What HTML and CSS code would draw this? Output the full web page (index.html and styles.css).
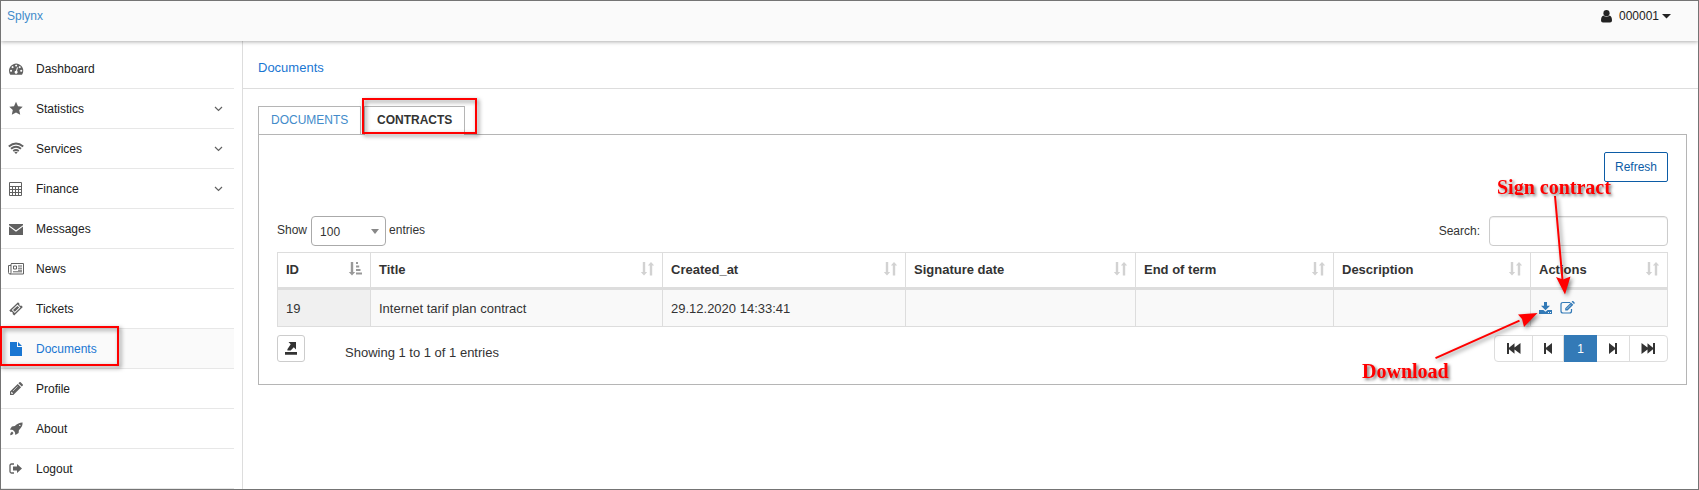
FILE: index.html
```html
<!DOCTYPE html>
<html lang="en">
<head>
<meta charset="utf-8">
<title>Splynx</title>
<link rel="stylesheet" href="styles.css">
</head>
<body>
<svg width="0" height="0" class="defs">
  <symbol id="sort" viewBox="0 0 13 14"><path d="M1.800 0h2.400v10h2L3 13.500-.2 10h2zM8.800 13.500h2.400v-10h2L10 0 6.800 3.500h2z"/></symbol>
</svg>
<div class="app">
  <header class="topbar">
    <a class="brand">Splynx</a>
    <div class="user">
      <svg width="12" height="13" viewBox="0 0 12 13"><circle cx="5.500" cy="3.200" r="3.100"/><path d="M2.300 5.500Q5.500 8 8.700 5.500 11 6.500 11 10.500 11 12.500 9 12.500H2Q0 12.500 0 10.500 0 6.500 2.300 5.500z"/></svg>
      <span>000001</span>
      <svg class="caret" width="9" height="5" viewBox="0 0 9 5"><path d="M0 0h9L4.500 4.600z"/></svg>
    </div>
  </header>
  <div class="main">
    <nav class="sidebar">
      <a class="item"><svg class="ico" viewBox="0 0 1792 1792"><path transform="translate(115 60) scale(.89)" d="M384 1152q0-53-37.500-90.500t-90.500-37.500-90.500 37.500-37.500 90.500 37.500 90.500 90.500 37.500 90.500-37.500 37.500-90.500zm192-448q0-53-37.500-90.500t-90.500-37.500-90.500 37.500-37.500 90.500 37.500 90.500 90.500 37.500 90.500-37.500 37.500-90.500zm428 481l101-382q6-26-7.500-48.500t-38.500-29.500-48 6.500-30 39.500l-101 382q-60 5-107 43.500t-63 98.500q-20 77 20 146t117 89 146-20 89-117q16-60-6-117t-72-91zm660-33q0-53-37.500-90.500t-90.500-37.500-90.500 37.500-37.500 90.500 37.500 90.500 90.500 37.500 90.500-37.500 37.500-90.500zm-640-640q0-53-37.500-90.500t-90.500-37.500-90.500 37.500-37.500 90.500 37.500 90.500 90.500 37.500 90.500-37.500 37.500-90.500zm448 192q0-53-37.500-90.500t-90.500-37.500-90.500 37.500-37.500 90.500 37.500 90.500 90.500 37.500 90.500-37.500 37.500-90.500zm320 448q0 261-141 483-19 29-54 29h-1402q-35 0-54-29-141-221-141-483 0-182 71-348t191-286 286-191 348-71 348 71 286 191 191 286 71 348z"/></svg><span>Dashboard</span></a>
      <a class="item"><svg class="ico" viewBox="0 0 16 16"><path d="M8 .8l2 4.400 4.700.5-3.500 3.200 1 4.900L8 11.400l-4.200 2.400 1-4.900L1.300 5.700 6 5.200z"/></svg><span>Statistics</span><svg class="chev" viewBox="0 0 9 6"><path d="M1 1l3.500 3.400L8 1"/></svg></a>
      <a class="item"><svg class="ico line" viewBox="0 0 16 16"><path d="M.8 5.500Q8 -.7 15.200 5.500M3 7.800Q8 3.600 13 7.800M5.200 10Q8 8 10.800 10" stroke-width="1.900"/><path class="solid" d="M6.300 11.200Q8 10.200 9.700 11.200L8 13z"/></svg><span>Services</span><svg class="chev" viewBox="0 0 9 6"><path d="M1 1l3.500 3.400L8 1"/></svg></a>
      <a class="item"><svg class="ico line" viewBox="0 0 16 16"><path d="M1.500 1.500h12v13h-12zM1.500 5.500h12M1.500 8.500h12M1.500 11.500h12M4.500 5.500v9M7.500 5.500v9M10.500 5.500v9"/></svg><span>Finance</span><svg class="chev" viewBox="0 0 9 6"><path d="M1 1l3.500 3.400L8 1"/></svg></a>
      <a class="item"><svg class="ico" viewBox="0 0 16 16"><path d="M1 3h14v1.200L8 9.200 1 4.200zM1 5.600l7 5.100 7-5.100V14H1z"/></svg><span>Messages</span></a>
      <a class="item"><svg class="ico line" viewBox="0 0 16 16"><path d="M3 2.500h12.500v10.500H2Q.5 13 .5 11.500V4.500H3M3 3v8.500Q3 13 2 13M5.500 5h3v3h-3zM10 5h4M10 7.200h4M10 9.200h4M5 10.800h9"/></svg><span>News</span></a>
      <a class="item"><svg class="ico" viewBox="0 0 16 16"><path fill-rule="evenodd" d="M10 1.300l1.500 1.500q-.5 1 .2 1.700.7.500 1.600.1l1.500 1.500-8.600 8.300-1.600-1.500q.5-1-.2-1.700-.7-.6-1.700-.2L1.300 9.600zM9.500 3.600L3.800 9.100l3 2.900 5.700-5.500zM9.400 4.900l1.800 1.700-4.400 4.200L5 9.100z"/></svg><span>Tickets</span></a>
      <a class="item active"><svg class="ico" viewBox="0 0 16 16"><path d="M2 1h7v5h5v9H2zM10 1l4 4h-4z"/></svg><span>Documents</span></a>
      <a class="item"><svg class="ico" viewBox="0 0 16 16"><path fill-rule="evenodd" d="M2 10.600L9.700 3l3.400 3.300L5.300 14H2zm1.200.6v1.500h1.600l.3-.4-1.600-1.500zM10.400 2.300l1-1q.6-.6 1.300 0l2.100 2.100q.5.500 0 1.200l-1 1z"/><path d="M5 10l4.600-4.600" stroke="#fff" stroke-width=".6"/></svg><span>Profile</span></a>
      <a class="item"><svg class="ico" viewBox="0 0 16 16"><path fill-rule="evenodd" d="M14.600 1.600Q14.800 5.700 10.900 9.200L10.600 12l-3.200 2-.6-3-1.900-1.900-3-.6 2-3.100 2.900-.3Q10.300 1.500 14.600 1.600zM11.800 3.700a.7.700 0 100 1.400.7.700 0 000-1.400zM4 10.500l1.500 1.500-1.300 1.700-2 .5.300-2.200z"/></svg><span>About</span></a>
      <a class="item"><svg class="ico" viewBox="0 0 16 16"><path class="outline" d="M6 3H3.500Q2 3 2 4.500v6Q2 12 3.500 12H6"/><path d="M5 5.500h4V3l5 4.500L9 12V9.500H5z"/></svg><span>Logout</span></a>
    </nav>
    <main class="content">
      <div class="crumb">Documents</div>
      <div class="tabs"><a class="tab">DOCUMENTS</a><a class="tab current">CONTRACTS</a></div>
      <section class="panel">
        <div class="actions"><button class="refresh">Refresh</button></div>
        <div class="tools">
          <div class="length">Show<div class="select"><span>100</span><svg width="8" height="5" viewBox="0 0 8 5"><path d="M0 0h8L4 5z"/></svg></div>entries</div>
          <label class="search">Search:<input type="text"></label>
        </div>
        <table class="grid">
          <colgroup><col class="c1"><col class="c2"><col class="c3"><col class="c4"><col class="c5"><col class="c6"><col class="c7"></colgroup>
          <thead><tr>
            <th><div>ID<svg class="sort on" viewBox="0 0 13 14"><path d="M1.800 0h2.400v10h2L3 13.500-.2 10h2zM7 0h2v2H7zM7 3.500h3.200v2H7zM7 7h4.500v2H7zM7 10.500h6v2H7z"/></svg></div></th>
            <th><div>Title<svg class="sort"><use href="#sort"/></svg></div></th>
            <th><div>Created_at<svg class="sort"><use href="#sort"/></svg></div></th>
            <th><div>Signature date<svg class="sort"><use href="#sort"/></svg></div></th>
            <th><div>End of term<svg class="sort"><use href="#sort"/></svg></div></th>
            <th><div>Description<svg class="sort"><use href="#sort"/></svg></div></th>
            <th><div>Actions<svg class="sort"><use href="#sort"/></svg></div></th>
          </tr></thead>
          <tbody><tr>
            <td class="sorted">19</td><td>Internet tarif plan contract</td><td>29.12.2020 14:33:41</td><td></td><td></td><td></td>
            <td><div class="rowicons">
              <svg width="13" height="12" viewBox="0 0 13 12"><path fill-rule="evenodd" d="M5 0h3v3.800h3L6.500 8.300 2 3.800h3zM0 8h4.400l2.100 1.700L8.600 8H13v4H0zM9 10v1h1v-1zM11 10v1h1v-1z"/></svg>
              <svg width="15" height="13" viewBox="0 0 15 13"><path d="M10.300 1.500H3Q1 1.500 1 3.500v6.500q0 2 2 2h6.500q2 0 2-2V8" fill="none" stroke="#337ab7" stroke-width="1.200"/><path d="M5.200 9.600V7.200L11 1.400l2.300 2.300-5.800 5.900zM11.700.7l.6-.6q.4-.3.800 0l1.500 1.500q.3.400 0 .8l-.6.600z"/><path d="M6.500 8l4.400-4.400" stroke="#f9f9f9" stroke-width=".6"/></svg>
            </div></td>
          </tr></tbody>
        </table>
        <div class="foot">
          <button class="export"><svg width="12" height="13" viewBox="0 0 12 13"><path d="M0 10h12v2.800H0zM3.500 0H11v7.500L8.800 5.300 5.700 8.400H2.400V7.200L5.700 2.200z"/></svg></button>
          <span class="info">Showing 1 to 1 of 1 entries</span>
          <div class="pager">
            <a class="p1"><svg width="14" height="11" viewBox="0 0 14 11"><path d="M0 0h2v4.800L7.500.3v4.300L13.500 0v11L7.500 6.400v4.300L2 6.200V11H0z"/></svg></a>
            <a class="p2"><svg width="8" height="11" viewBox="0 0 8 11"><path d="M0 0h2v4.800L8 0v11L2 6.200V11H0z"/></svg></a>
            <a class="p3">1</a>
            <a class="p4"><svg width="8" height="11" viewBox="0 0 8 11"><path d="M8 0H6v4.800L0 0v11l6-4.800V11h2z"/></svg></a>
            <a class="p5"><svg width="14" height="11" viewBox="0 0 14 11"><path d="M14 0h-2v4.800L6.500.3v4.300L.5 0v11l6-4.600v4.300L12 6.200V11h2z"/></svg></a>
          </div>
        </div>
      </section>
    </main>
  </div>
</div>
<div class="mark mark-menu"></div>
<div class="mark mark-tab"></div>
<svg class="arrows" viewBox="0 0 1699 490">
  <path class="shaft" d="M1555 196l7.500 84M1435.500 358.200l84-37.500"/>
  <path class="head" d="M1565 294.500l-9-17.500 7 2.500 7.500-3zM1537.500 313l-19.500 1.500 4 4.500 2 8z"/>
</svg>
<div class="note note-sign"><span>Sign contract</span></div>
<div class="note note-download"><span>Download</span></div>
</body>
</html>
```

FILE: styles.css
```css
* { box-sizing: border-box; }
body { margin: 0; font-family: "Liberation Sans", Arial, sans-serif; font-size: 12px; color: #333; background: #fff; position: relative; height: 490px; overflow: hidden; }
.defs { position: absolute; }
svg { display: block; flex: none; }
.app { height: 490px; border: 1px solid #747474; display: flex; flex-direction: column; overflow: hidden; }
.topbar { height: 40px; flex: none; background: #fafafa; box-shadow: 0 1px 4px rgba(0,0,0,.32); display: flex; justify-content: space-between; padding: 8px 27px 0 6px; line-height: 14px; position: relative; z-index: 1; }
.brand { color: #428bca; }
.user { display: flex; height: 14px; align-items: center; color: #222; fill: #222; }
.user span { margin: 0 3px 0 6px; }
.main { display: flex; flex: 1; min-height: 0; }
.sidebar { width: 242px; flex: none; border-right: 1px solid #ddd; padding: 8px 8px 0 0; }
.item { display: flex; align-items: center; height: 40px; border-bottom: 1px solid #e7e7e7; padding: 0 11px 0 7px; color: #212121; }
.item span { margin-left: 12px; flex: 1; }
.ico { width: 16px; height: 16px; fill: #616161; }
.line { fill: none; stroke: #616161; stroke-width: 1; }
.solid { fill: #616161; stroke: none; }
.outline { fill: none; stroke: #616161; stroke-width: 1.300; }
.active { background: #fafafa; color: #1976d2; }
.active .ico { fill: #1976d2; }
.chev { width: 9px; height: 6px; fill: none; stroke: #616161; stroke-width: 1.200; }
.content { flex: 1; min-width: 0; }
.crumb { height: 48px; border-bottom: 1px solid #ddd; padding: 19px 15px 0; font-size: 13px; line-height: 15px; color: #1976d2; }
.tabs { display: flex; gap: 3px; padding: 17px 0 0 15px; }
.tab { height: 28px; border: 1px solid #b5b5b5; border-bottom: 0; padding: 0 12px; line-height: 27px; color: #428bca; width: 103px; }
.current { color: #333; font-weight: bold; width: 101px; position: relative; height: 29px; margin-bottom: -1px; background: #fff; }
.panel { margin: 0 11px 0 15px; border: 1px solid #b5b5b5; height: 251px; padding: 17px 18px 0; }
.actions { display: flex; justify-content: flex-end; height: 64px; }
.refresh { width: 64px; height: 30px; border: 1px solid #0c5ca6; border-radius: 2px; background: #fff; color: #0c5ca6; font: 12px "Liberation Sans", sans-serif; padding: 0; }
.tools { display: flex; justify-content: space-between; height: 36px; }
.length { display: flex; line-height: 28px; }
.select { width: 75px; height: 30px; border: 1px solid #aaa; border-radius: 4px; margin: 0 3px 0 4px; display: flex; align-items: center; justify-content: space-between; padding: 2px 6px 0 8px; fill: #888; }
.select svg { margin-bottom: 1px; }
.search { display: flex; line-height: 30px; }
.search input { width: 179px; height: 30px; border: 1px solid #ccc; border-radius: 4px; margin-left: 9px; box-shadow: inset 0 1px 1px rgba(0,0,0,.075); }
.grid { width: 1391px; table-layout: fixed; border-collapse: separate; border-spacing: 0; border-left: 1px solid #ddd; border-top: 1px solid #ddd; font-size: 13px; }
.c1 { width: 93px; }
.c2 { width: 292px; }
.c3 { width: 243px; }
.c4 { width: 230px; }
.c5 { width: 198px; }
.c6 { width: 197px; }
.c7 { width: 137px; }
.grid th, .grid td { padding: 0 8px; border-right: 1px solid #ddd; text-align: left; }
.grid th { height: 37px; border-bottom: 3px solid #ddd; padding-bottom: 2px; }
.grid th div { display: flex; justify-content: space-between; align-items: center; }
.grid td { height: 37px; border-bottom: 1px solid #ddd; background: #f9f9f9; }
.grid .sorted { background: #f0f0f0; }
.sort { width: 13px; height: 14px; fill: #d2d2d2; overflow: visible; }
.on { fill: #999; }
.rowicons { display: flex; gap: 8px; align-items: center; fill: #337ab7; padding-bottom: 1px; }
.foot { display: flex; padding-top: 8px; font-size: 13px; }
.export { width: 28px; height: 27px; border: 1px solid #ccc; border-radius: 3px; background: #fff; display: flex; align-items: center; justify-content: center; padding: 0; fill: #333; }
.info { margin-left: 40px; padding-top: 10px; line-height: 15px; flex: 1; }
.pager { display: flex; width: 174px; height: 27px; border: 1px solid #ddd; border-radius: 4px; fill: #333; }
.pager a { display: flex; align-items: center; justify-content: center; border-right: 1px solid #ddd; }
.p1 { width: 38px; }
.p2 { width: 31px; }
.pager .p3 { width: 33px; margin: -1px 0; background: #337ab7; color: #fff; border: 0; font-size: 12px; }
.p4 { width: 33px; }
.pager .p5 { flex: 1; border: 0; padding-right: 2px; }
.mark { position: absolute; border: 2px solid #f00; filter: drop-shadow(2px 2px 2px rgba(0,0,0,.5)); }
.mark-menu { left: 0; top: 326px; width: 119px; height: 40px; }
.mark-tab { left: 362px; top: 98px; width: 115px; height: 36px; }
.arrows { position: absolute; left: 0; top: 0; width: 1699px; height: 490px; filter: drop-shadow(2px 2px 2px rgba(0,0,0,.5)); }
.shaft { stroke: #f00; stroke-width: 2; }
.head { fill: #f00; }
.note { position: absolute; font: bold 20px/22px "Liberation Serif", serif; color: #f00; white-space: nowrap; filter: drop-shadow(2px 2px 1.500px rgba(0,0,0,.5)); }
.note span { display: block; }
.note-sign { left: 1497px; top: 176px; }
.note-sign span { clip-path: inset(0 0 3px 0); }
.note-download { left: 1362px; top: 360px; }
```
